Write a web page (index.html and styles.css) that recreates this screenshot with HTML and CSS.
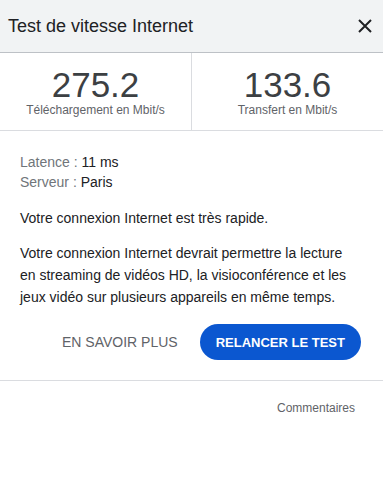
FILE: index.html
```html
<!DOCTYPE html>
<html>
  <head>
    <meta charset="utf-8">
    <meta name="viewport" content="width=device-width, initial-scale=1">
    <title>Test de vitesse Internet</title>
    <link rel="stylesheet" href="styles.css">
  </head>
  <body>
    <div class="speed-card">
      <div class="card-head">
        <div class="card-title">Test de vitesse Internet</div>
        <button class="close-btn" aria-label="Fermer">
          <svg width="14" height="14" viewBox="0 0 14 14">
            <path d="M1 1 L13 13 M13 1 L1 13" stroke="#202124" stroke-width="2" fill="none"/>
          </svg>
        </button>
      </div>

      <div class="stats">
        <div class="stat">
          <div class="stat_value">275.2</div>
          <div class="stat_label">Téléchargement en Mbit/s</div>
        </div>
        <div class="stat">
          <div class="stat_value">133.6</div>
          <div class="stat_label">Transfert en Mbit/s</div>
        </div>
      </div>

      <div class="details">
        <div class="meta">
          <div><span class="meta_key">Latence : </span>11 ms</div>
          <div><span class="meta_key">Serveur : </span>Paris</div>
        </div>
        <p class="summary">Votre connexion Internet est très rapide.</p>
        <p class="summary long">Votre connexion Internet devrait permettre la lecture en streaming de vidéos HD, la visioconférence et les jeux vidéo sur plusieurs appareils en même temps.</p>
        <div class="actions">
          <a class="link-btn" href="#">EN SAVOIR PLUS</a>
          <button class="primary-btn">RELANCER LE TEST</button>
        </div>
      </div>

      <div class="card-foot">
        <a class="feedback" href="#">Commentaires</a>
      </div>
    </div>
  </body>
</html>
```

FILE: styles.css
```css
html, body{
  margin: 0;
  padding: 0;
  background: #FFFFFF;
  font-family: "Liberation Sans", Arial, sans-serif;
  color: #202124;
}
.speed-card{
  width: 383px;
}
.card-head{
  display: flex;
  align-items: center;
  justify-content: space-between;
  height: 53px;
  padding: 0 11px 0 8px;
  background: #F1F3F4;
  border-bottom: 1px solid #BDC1C6;
  box-sizing: border-box;
}
.card-title{
  font-size: 18px;
  color: #202124;
}
.close-btn{
  all: unset;
  display: flex;
  width: 14px;
  height: 14px;
  cursor: pointer;
}
.stats{
  display: flex;
  height: 77px;
  border-bottom: 1px solid #DADCE0;
}
.stat{
  flex: 1;
  display: flex;
  flex-direction: column;
  align-items: center;
  padding-top: 14px;
}
.stat + .stat{
  border-left: 1px solid #DADCE0;
}
.stat_value{
  font-size: 35px;
  line-height: 36px;
  color: #3C4043;
}
.stat_label{
  font-size: 12px;
  line-height: 14px;
  color: #5F6368;
}
.details{
  padding: 21px 22px 20px 20px;
  border-bottom: 1px solid #DADCE0;
}
.meta{
  font-size: 14px;
  line-height: 20px;
}
.meta_key{
  color: #70757A;
}
.summary{
  max-width: 334px;
  margin: 15px 0 0;
  font-size: 14px;
  line-height: 22px;
}
.summary.long{
  margin-top: 13px;
}
.actions{
  display: flex;
  justify-content: flex-end;
  align-items: center;
  gap: 22px;
  margin-top: 16px;
}
.link-btn{
  font-size: 14px;
  color: #5F6368;
  text-decoration: none;
}
.primary-btn{
  all: unset;
  display: flex;
  align-items: center;
  height: 36px;
  padding: 0 16px;
  border-radius: 18px;
  background: #0B57D0;
  color: #FFFFFF;
  font-size: 13px;
  font-weight: bold;
  cursor: pointer;
}
.card-foot{
  display: flex;
  justify-content: flex-end;
  padding: 20px 28px;
}
.feedback{
  font-size: 12px;
  line-height: 15px;
  color: #5F6368;
  text-decoration: none;
}
```
